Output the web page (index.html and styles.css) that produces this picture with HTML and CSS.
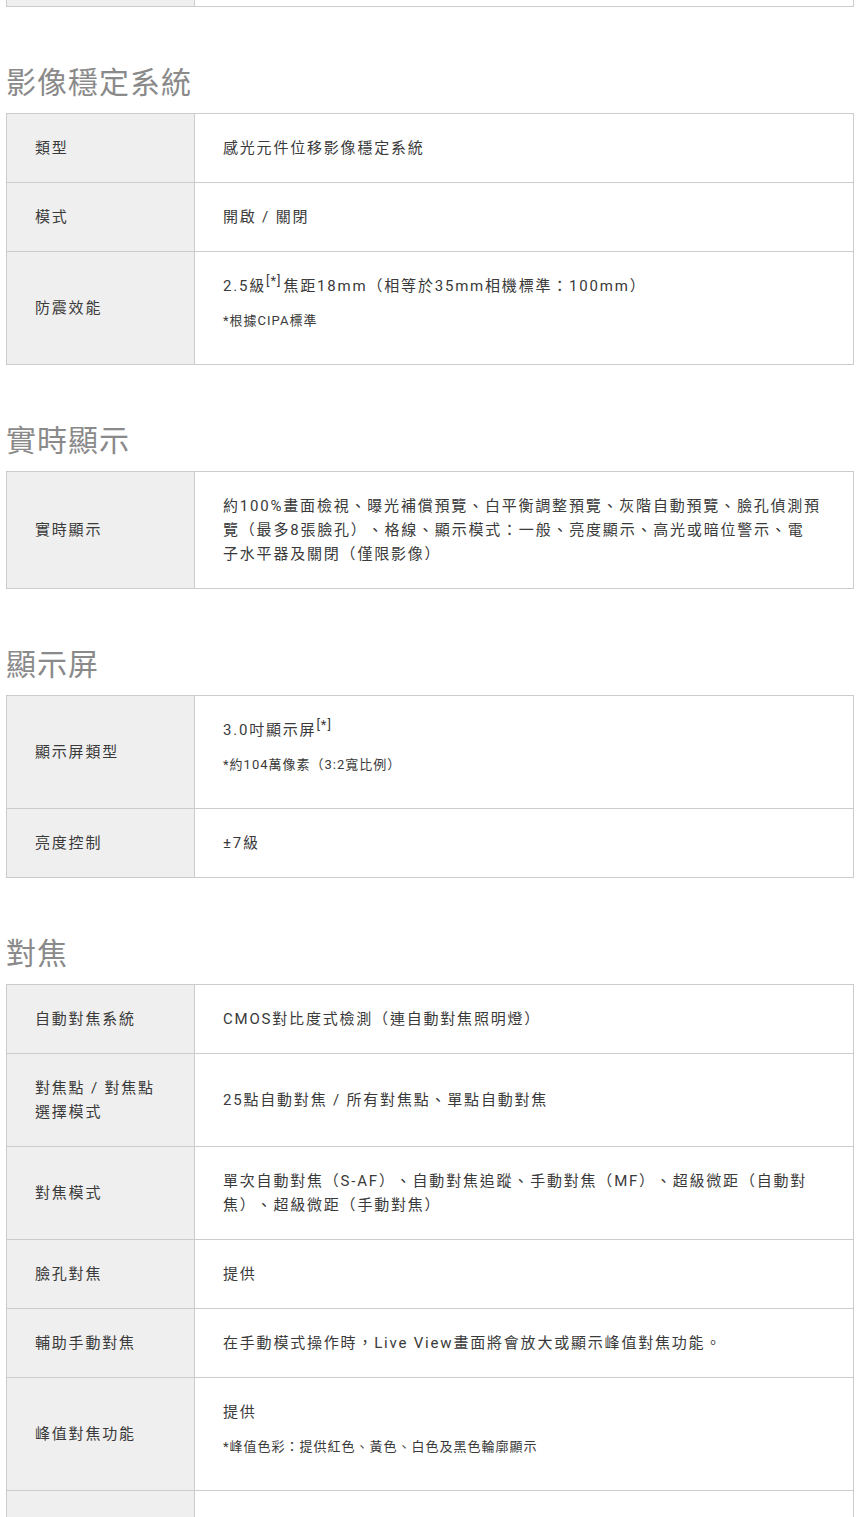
FILE: index.html
```html
<!DOCTYPE html>
<html lang="zh-Hant">
<head>
    <meta charset="UTF-8">
    <meta name="viewport" content="width=device-width, initial-scale=1.0">
    <title>規格</title>
    <link rel="stylesheet" href="styles.css">
</head>
<body>
    <div class="page">
        <table class="spec-table spec-tail">
            <tr>
                <th></th>
                <td></td>
            </tr>
        </table>

        <section class="spec-section">
            <h2 class="spec-title">影像穩定系統</h2>
            <table class="spec-table">
                <tr>
                    <th>類型</th>
                    <td>感光元件位移影像穩定系統</td>
                </tr>
                <tr>
                    <th>模式</th>
                    <td>開啟 / 關閉</td>
                </tr>
                <tr>
                    <th>防震效能</th>
                    <td>
                        <p class="spec-main">2.5級<sup class="note-ref">[*]</sup>焦距18mm（相等於35mm相機標準：100mm）</p>
                        <p class="spec-note">*根據CIPA標準</p>
                    </td>
                </tr>
            </table>
        </section>

        <section class="spec-section">
            <h2 class="spec-title">實時顯示</h2>
            <table class="spec-table">
                <tr>
                    <th>實時顯示</th>
                    <td>約100%畫面檢視、曝光補償預覽、白平衡調整預覽、灰階自動預覽、臉孔偵測預覽（最多8張臉孔）、格線、顯示模式：一般、亮度顯示、高光或暗位警示、電<br>子水平器及關閉（僅限影像）</td>
                </tr>
            </table>
        </section>

        <section class="spec-section">
            <h2 class="spec-title">顯示屏</h2>
            <table class="spec-table">
                <tr>
                    <th>顯示屏類型</th>
                    <td>
                        <p class="spec-main">3.0吋顯示屏<sup class="note-ref">[*]</sup></p>
                        <p class="spec-note">*約104萬像素（3:2寬比例）</p>
                    </td>
                </tr>
                <tr>
                    <th>亮度控制</th>
                    <td>±7級</td>
                </tr>
            </table>
        </section>

        <section class="spec-section">
            <h2 class="spec-title">對焦</h2>
            <table class="spec-table">
                <tr>
                    <th>自動對焦系統</th>
                    <td>CMOS對比度式檢測（連自動對焦照明燈）</td>
                </tr>
                <tr>
                    <th>對焦點 / 對焦點選擇模式</th>
                    <td>25點自動對焦 / 所有對焦點、單點自動對焦</td>
                </tr>
                <tr>
                    <th>對焦模式</th>
                    <td>單次自動對焦（S-AF）、自動對焦追蹤、手動對焦（MF）、超級微距（自動對焦）、超級微距（手動對焦）</td>
                </tr>
                <tr>
                    <th>臉孔對焦</th>
                    <td>提供</td>
                </tr>
                <tr>
                    <th>輔助手動對焦</th>
                    <td>在手動模式操作時，Live View畫面將會放大或顯示峰值對焦功能。</td>
                </tr>
                <tr>
                    <th>峰值對焦功能</th>
                    <td>
                        <p class="spec-main">提供</p>
                        <p class="spec-note">*峰值色彩：提供紅色、黃色、白色及黑色輪廓顯示</p>
                    </td>
                </tr>
                <tr class="spec-row-empty">
                    <th></th>
                    <td></td>
                </tr>
            </table>
        </section>
    </div>
</body>
</html>
```

FILE: styles.css
```css
body {
    margin: 0;
    padding: 0;
    background: #fff;
    font-family: Roboto, "Noto Sans CJK JP", sans-serif;
    color: #3a3a3a;
    text-spacing-trim: space-all;
}

.page {
    padding: 0 6px;
}

.spec-section {
    margin-top: 56px;
}

.spec-title {
    margin: 0 0 10px;
    font-size: 30px;
    line-height: 40px;
    font-weight: normal;
    letter-spacing: 1px;
    color: #8a8a8a;
}

.spec-table {
    width: 100%;
    border-collapse: collapse;
    border: 1px solid #ccc;
}

.spec-table th,
.spec-table td {
    border: 1px solid #ccc;
    padding: 22px 28px;
    font-size: 15px;
    line-height: 24px;
    letter-spacing: 1.8px;
    font-weight: normal;
    text-align: left;
    vertical-align: middle;
}

.spec-table th {
    width: 188px;
    box-sizing: border-box;
    background: #efefef;
}

.spec-tail {
    border-top: none;
}

.spec-tail th,
.spec-tail td {
    height: 6px;
    padding: 0;
    border-top: none;
}

.spec-row-empty th,
.spec-row-empty td {
    height: 24px;
}

.spec-main {
    margin: 0;
}

.spec-note {
    margin: 13px 0 11px;
    font-size: 13px;
    line-height: 20px;
    letter-spacing: 1px;
}

.note-ref {
    font-size: 13px;
    line-height: 1;
    vertical-align: 6px;
    letter-spacing: 1px;
    margin-right: 2px;
}
```
